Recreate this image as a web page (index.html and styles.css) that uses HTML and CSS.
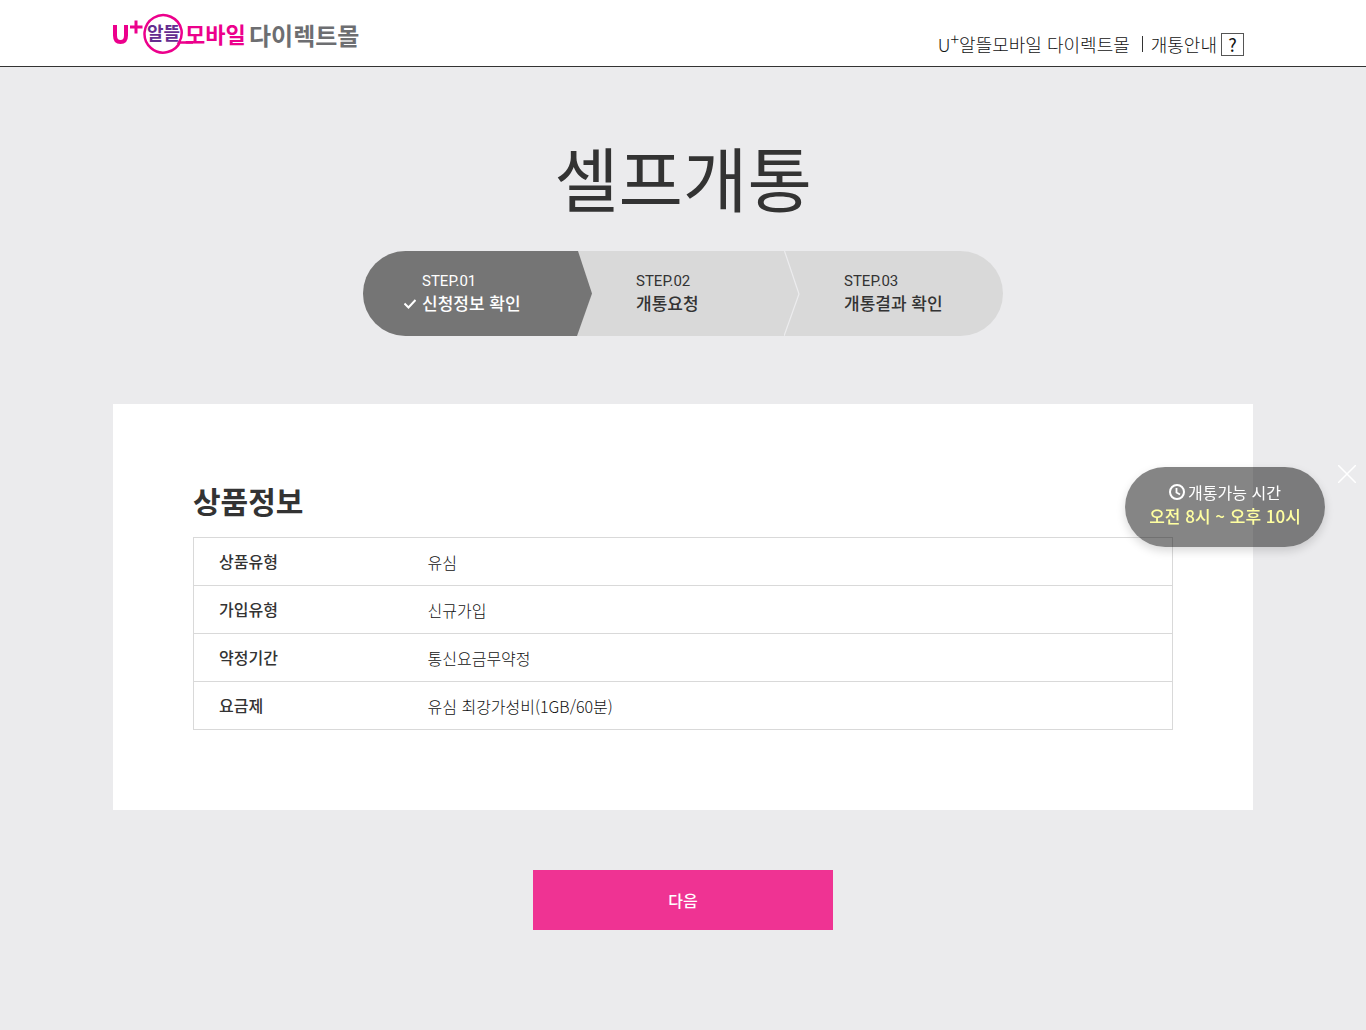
FILE: index.html
```html
<!DOCTYPE html>
<html lang="ko">
<head>
  <meta charset="UTF-8">
  <meta name="viewport" content="width=device-width, initial-scale=1">
  <title>셀프개통</title>
  <link rel="stylesheet" href="styles.css">
</head>
<body>
  <header class="header">
    <div class="header-inner">
      <a href="#" class="logo">
        <svg width="246" height="44" viewBox="0 0 246 44">
          <path d="M2 13v10.500q0 6.500 5.500 6.500t5.500-6.500V13" fill="none" stroke="#ec008c" stroke-width="4"/>
          <path d="M17 15h12.500M23 8.500v13" fill="none" stroke="#ec008c" stroke-width="3"/>
          <path d="M67.500 29A18.700 18.700 0 1 1 68.500 18Q69.500 25 66 30.500H80" fill="none" stroke="#ec008c" stroke-width="2.500"/>
          <text class="logo-mark" x="34" y="28">알뜰</text>
          <text class="logo-mobile" x="72" y="31">모바일</text>
          <text class="logo-mall" x="136" y="33">다이렉트몰</text>
        </svg>
      </a>
      <nav class="nav">
        <a href="#">U<sup>+</sup>알뜰모바일 다이렉트몰</a>
        <a href="#" class="guide">개통안내 <span class="help">?</span></a>
      </nav>
    </div>
  </header>

  <main class="container">
    <h1>셀프개통</h1>
    <ol class="steps">
      <li class="step active">
        <span class="step-no">STEP.01</span>
        <strong>
          <svg class="check" width="12" height="10" viewBox="0 0 12 10"><path d="M.5 4.500l4 4L11.500 1" fill="none" stroke="#fff" stroke-width="2"/></svg>
          신청정보 확인
        </strong>
      </li>
      <li class="step">
        <span class="step-no">STEP.02</span>
        <strong>개통요청</strong>
        <svg class="arrow" width="16" height="85" viewBox="0 0 16 85"><path d="M.5 0L15 43L0 85" fill="none" stroke="#ececee" stroke-width="1.200"/></svg>
      </li>
      <li class="step">
        <span class="step-no">STEP.03</span>
        <strong>개통결과 확인</strong>
      </li>
    </ol>

    <section class="card">
      <h2>상품정보</h2>
      <table>
        <tr><th scope="row">상품유형</th><td>유심</td></tr>
        <tr><th scope="row">가입유형</th><td>신규가입</td></tr>
        <tr><th scope="row">약정기간</th><td>통신요금무약정</td></tr>
        <tr><th scope="row">요금제</th><td>유심 최강가성비(1GB/60분)</td></tr>
      </table>
    </section>

    <button type="button" class="btn-next">다음</button>
  </main>

  <!-- floating opening hours -->
  <aside class="notice">
    <p class="notice-title">
      <svg width="16" height="16" viewBox="0 0 16 16"><circle cx="8" cy="8" r="7" fill="none" stroke="#fff" stroke-width="2"/><path d="M7.500 4v4.500l3.500 2" fill="none" stroke="#fff" stroke-width="1.800"/></svg>
      개통가능 시간
    </p>
    <p class="notice-time">오전 8시 ~ 오후 10시</p>
    <button type="button" class="notice-close" aria-label="닫기">
      <svg width="18" height="18" viewBox="0 0 18 18"><path d="M0 0l18 18M18 0L0 18" stroke="#fff" stroke-width="1.500"/></svg>
    </button>
  </aside>
</body>
</html>
```

FILE: styles.css
```css
* {
  box-sizing: border-box;
}
body {
  margin: 0;
  background: #ebebed;
  color: #333;
  font-family: "Noto Sans CJK KR", sans-serif;
  font-size: 16px;
  line-height: 24px;
}
a {
  color: inherit;
  text-decoration: none;
}
svg {
  display: block;
}
.header {
  background: #fff;
  border-bottom: 1px solid #333;
}
.header-inner {
  display: flex;
  justify-content: space-between;
  align-items: flex-end;
  width: 100%;
  max-width: 1140px;
  height: 66px;
  margin: 0 auto;
  padding: 0 9px 10px 0;
}
.logo-mark {
  fill: #652d90;
  font-size: 18px;
  font-weight: 700;
}
.logo-mobile {
  fill: #ec008c;
  font-size: 22px;
  font-weight: 700;
}
.logo-mall {
  fill: #6d6e71;
  font-size: 24px;
  font-weight: 700;
}
.nav {
  display: flex;
  align-items: center;
  color: #111;
  font-size: 18px;
  font-weight: 300;
}
.nav sup {
  font-size: 16px;
  line-height: 0;
}
.guide {
  display: flex;
  align-items: center;
  gap: 4px;
}
.guide::before {
  content: "";
  width: 1px;
  height: 16px;
  margin: 0 4px 0 12px;
  background: #333;
}
.help {
  width: 23px;
  height: 23px;
  border: 1px solid #555;
  font-weight: 400;
  line-height: 21px;
  text-align: center;
}
.container {
  max-width: 1140px;
  margin: 0 auto;
  padding-bottom: 100px;
}
h1 {
  margin: 0;
  padding-top: 60px;
  font-size: 70px;
  font-weight: 400;
  line-height: 100px;
  text-align: center;
}
.steps {
  display: grid;
  grid-template-columns: 214px 208px 218px;
  width: 640px;
  height: 85px;
  margin: 24px auto 68px;
  padding: 0;
  overflow: hidden;
  border-radius: 43px;
  background: #d9d9d9;
  list-style: none;
}
.step {
  position: relative;
  padding: 20px 0 0 59px;
}
.step.active {
  margin-right: -15px;
  background: #757575;
  clip-path: polygon(0 0, 215px 0, 100% 50%, 214px 100%, 0 100%);
  color: #fff;
}
.step-no {
  display: block;
  font-family: Roboto, sans-serif;
  font-size: 15px;
  line-height: 20px;
}
.step strong {
  display: block;
  font-size: 17px;
  font-weight: 500;
  line-height: 24px;
}
.check {
  position: absolute;
  left: 41px;
  top: 48px;
}
.arrow {
  position: absolute;
  right: -15px;
  top: 0;
}
.card {
  padding: 78px 80px 80px;
  background: #fff;
}
h2 {
  margin: 0 0 19px;
  font-size: 30px;
  font-weight: 700;
  line-height: 36px;
}
table {
  width: 100%;
  border: 1px solid #d9d9d9;
  border-collapse: collapse;
}
tr {
  border-bottom: 1px solid #d9d9d9;
}
th, td {
  height: 48px;
  padding: 0 25px;
  text-align: left;
}
th {
  width: 209px;
  padding-bottom: 2px;
  font-weight: 500;
}
td {
  color: #111;
  font-weight: 300;
}
.btn-next {
  display: block;
  width: 300px;
  height: 60px;
  margin: 60px auto 0;
  border: 0;
  background: #ef3393;
  color: #fff;
  font-family: inherit;
  font-size: 16px;
  font-weight: 500;
  cursor: pointer;
}
.notice {
  position: fixed;
  top: 467px;
  right: 41px;
  width: 200px;
  height: 80px;
  padding-top: 13px;
  border-radius: 40px;
  background: rgba(0, 0, 0, 0.48);
  box-shadow: 0 4px 10px rgba(0, 0, 0, 0.15);
  color: #fff;
  text-align: center;
}
.notice p {
  margin: 0;
}
.notice-title {
  display: flex;
  justify-content: center;
  align-items: center;
  gap: 3px;
}
.notice-time {
  color: #ffffa0;
  font-size: 17px;
  font-weight: 500;
}
.notice-close {
  position: absolute;
  top: -2px;
  right: -31px;
  padding: 0;
  border: 0;
  background: none;
  cursor: pointer;
}
```
